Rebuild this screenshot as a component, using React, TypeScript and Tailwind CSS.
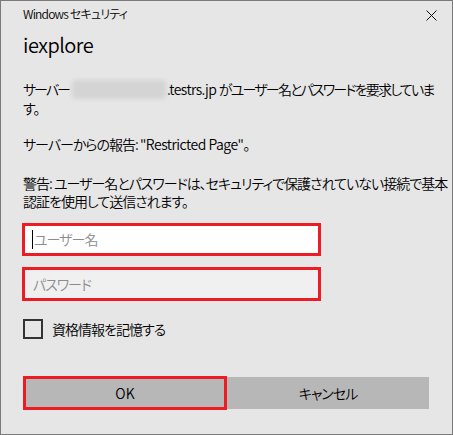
import React from "react";

const jp = "font-['Noto_Sans_CJK_JP',sans-serif] [font-feature-settings:'palt']";

export default function App() {
  return (
    <div className={`w-[453px] h-[435px] bg-[#e6e6e6] border border-[#7a7a7a] flex flex-col text-black font-[350] ${jp}`}>
      {/* title bar */}
      <div className="flex items-start justify-between pl-[22px] pr-[15px] pt-[5px]">
        <span className="text-[12px] leading-[16px] tracking-[-0.8px]">Windows セキュリティ</span>
        <svg width="11" height="11" viewBox="0 0 11 11" className="mt-[4px]">
          <path d="M0.5 0.5 L10.5 10.5 M10.5 0.5 L0.5 10.5" stroke="#111" strokeWidth="1" />
        </svg>
      </div>
      <div className="pl-[22px] pr-[16px]">
        <div className="mt-[9px] text-[20px] leading-[28px] tracking-[-0.5px]">iexplore</div>

        <div className="mt-[21px] text-[14px] leading-[19px] whitespace-nowrap tracking-[-1px]">
          <div className="flex items-center">
            <span className="tracking-[-2px]">サーバー</span>
            <span className="inline-block w-[94px] h-[19px] ml-[3px] mr-[1px] bg-[#d4d4d4] rounded-[4px] blur-[2px]" />
            <span className="tracking-[-1.8px]">
              <span className="tracking-[-0.6px]">.testrs.jp </span>がユーザー名とパスワードを要求していま
            </span>
          </div>
          <div>す。</div>
        </div>

        <div className="mt-[17px] text-[14px] leading-[19px] whitespace-nowrap tracking-[-1px]">
          サーバーからの報告: <span className="tracking-[-0.5px]">"Restricted Page"</span>。
        </div>

        <div className="mt-[20px] text-[14px] leading-[18px] whitespace-nowrap tracking-[-1px]">
          <div>警告: ユーザー名とパスワードは、セキュリティで保護されていない接続で基本</div>
          <div>認証を使用して送信されます。</div>
        </div>

        <div className="mt-[13px] ml-[-1px] w-[299px] h-[33px] border-[3px] border-[#ed1c24] bg-white flex items-center pl-[7px]">
          <span className="w-px h-[19px] bg-black" />
          <span className="text-[14px] text-[#8c8c8c] ml-[1px] tracking-[-1px]">ユーザー名</span>
        </div>

        <div className="mt-[11px] ml-[-1px] w-[299px] h-[34px] border-[3px] border-[#ed1c24] bg-[#f0f0f0] flex items-center pl-[8px]">
          <span className="text-[14px] text-[#8c8c8c] tracking-[-1px]">パスワード</span>
        </div>

        <div className="mt-[18px] flex items-center">
          <span className="w-[20px] h-[20px] border-2 border-[#333] box-border" />
          <span className="ml-[9px] text-[14px] leading-[19px] tracking-[-1px]">資格情報を記憶する</span>
        </div>

        <div className="mt-[37px] flex items-center">
          <div className="w-[204px] h-[34px] border-[3px] border-[#ed1c24] bg-[#b7b7b7] flex items-center justify-center text-[14px]">
            OK
          </div>
          <div className="w-[202px] h-[32px] bg-[#b7b7b7] flex items-center justify-center text-[14px] tracking-[-1px]">
            キャンセル
          </div>
        </div>
      </div>
    </div>
  );
}
